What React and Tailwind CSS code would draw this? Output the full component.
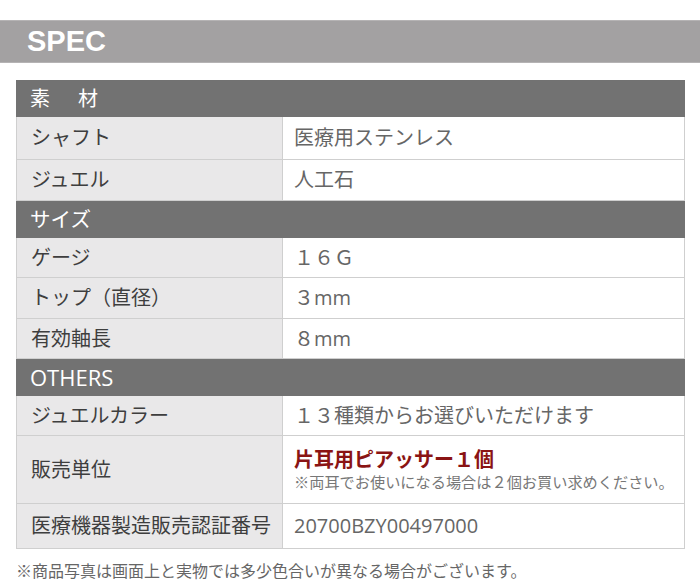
import React from 'react';

const font = { fontFamily: '"Open Sans", "Noto Sans CJK JP", sans-serif' };

const sections = [
  {
    title: '素　材',
    cls: 'text-[20px] tracking-[4px]',
    rows: [
      { label: 'シャフト', value: '医療用ステンレス', h: 'h-[43px]' },
      { label: 'ジュエル', value: '人工石', h: 'h-[41px]' },
    ],
  },
  {
    title: 'サイズ',
    cls: 'text-[20.5px]',
    rows: [
      { label: 'ゲージ', value: '１６Ｇ', h: 'h-[40px]' },
      { label: 'トップ（直径）', value: '３mm', h: 'h-[41px]' },
      { label: '有効軸長', value: '８mm', h: 'h-[40px]' },
    ],
  },
  {
    title: 'OTHERS',
    cls: 'text-[22px]',
    rows: [
      { label: 'ジュエルカラー', value: '１３種類からお選びいただけます', h: 'h-[40px]' },
      { label: '販売単位', unit: true, h: 'h-[68px]' },
      { label: '医療機器製造販売認証番号', value: '20700BZY00497000', h: 'h-[45px]' },
    ],
  },
];

const Row = ({ row }) => (
  <div className={`flex ${row.h} border-b border-[#cfcfcf]`}>
    <div className="w-[267px] shrink-0 flex items-center pl-[14px] bg-[#e9e8e9] border-l border-r border-[#cfcfcf] text-[20px] text-[#3e3e3e]">
      {row.label}
    </div>
    <div className="flex-1 flex flex-col justify-center pl-[11px] bg-white border-r border-[#cfcfcf] text-[20px] text-[#666666]">
      {row.unit ? (
        <>
          <div className="text-[#8a1414] font-bold leading-[25px]">片耳用ピアッサー１個</div>
          <div className="text-[15.2px] leading-[20px] text-[#777777]">※両耳でお使いになる場合は２個お買い求めください。</div>
        </>
      ) : (
        row.value
      )}
    </div>
  </div>
);

export default function App() {
  return (
    <div className="w-[700px] h-[585px] bg-white pt-[20px]" style={font}>
      <div className="h-[43px] bg-[#a3a1a2] border-y border-[#b5b3b4] flex items-center pl-[27px]">
        <span
          className="text-white font-bold text-[29px] leading-none"
          style={{ fontFamily: '"Liberation Sans", Arial, sans-serif' }}
        >
          SPEC
        </span>
      </div>

      <div className="ml-[16px] w-[669px] mt-[17px]">
        {sections.map((s) => (
          <div key={s.title}>
            <div className={`h-[37px] bg-[#727272] flex items-center pl-[14px] text-white ${s.cls}`}>
              {s.title}
            </div>
            {s.rows.map((r) => (
              <Row key={r.label} row={r} />
            ))}
          </div>
        ))}
      </div>

      <p className="ml-[16px] mt-[11px] text-[16px] leading-[22px] text-[#666666]">
        ※商品写真は画面上と実物では多少色合いが異なる場合がございます。
      </p>
    </div>
  );
}
